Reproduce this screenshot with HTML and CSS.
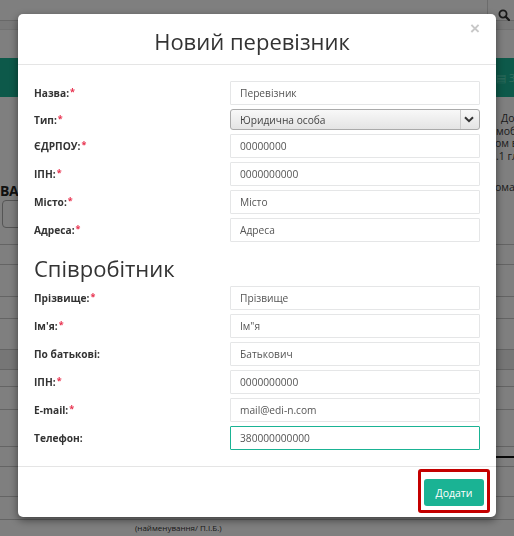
FILE: index.html
```html
<!DOCTYPE html>
<html lang="uk">
<head>
<meta charset="utf-8">
<title>Новий перевізник</title>
<link rel="stylesheet" href="styles.css">
</head>
<body>
<div class="page">
  <div class="topbar">
    <div class="search">
      <svg width="12" height="12" viewBox="0 0 12 12"><circle cx="5" cy="5" r="3.6" fill="none" stroke="#333" stroke-width="1.8"/><line x1="7.6" y1="7.6" x2="11" y2="11" stroke="#333" stroke-width="2.2" stroke-linecap="round"/></svg>
    </div>
  </div>
  <div class="subbar"></div>
  <div class="crumbs"></div>
  <div class="greenbar"><span class="savebtn">&#9636;&nbsp;Зберегти</span></div>
  <div class="content">
    <div class="left-col">
      <div class="ba">ВА</div>
      <div class="ba-box"></div>
    </div>
    <div class="right-text">
      <div class="ind">Довідка</div>
      <div>мобільного</div>
      <div class="cut">ом водія</div>
      <div>.1 глави</div>
      <div class="cut gap">ома</div>
    </div>
  </div>
  <div class="rows">
    <div class="r r1"></div>
    <div class="r r2"></div>
    <div class="r r3"></div>
    <div class="r r4"></div>
    <div class="r r5 dark"></div>
    <div class="r r6"></div>
    <div class="r r7"></div>
    <div class="r r8"></div>
    <div class="r r9"><span class="blackline"></span></div>
    <div class="r r10"></div>
    <div class="r r11"></div>
  </div>
  <div class="caption">(найменування/ П.І.Б.)</div>
</div>

<div class="backdrop"></div>

<div class="modal">
  <div class="modal-header">
    <span class="close">&times;</span>
    <h4 class="modal-title">Новий перевізник</h4>
  </div>
  <div class="modal-body">
    <div class="form-grid">
      <label class="lbl">Назва:<span class="req">*</span></label>
      <input class="fc" type="text" value="Перевізник">
      <label class="lbl">Тип:<span class="req">*</span></label>
      <div class="sel"><span class="sel-text">Юридична особа</span><span class="sel-arrow"><svg width="10" height="7" viewBox="0 0 10 7"><polyline points="1,1.2 5,5.2 9,1.2" fill="none" stroke="#333" stroke-width="2"/></svg></span></div>
      <label class="lbl">ЄДРПОУ:<span class="req">*</span></label>
      <input class="fc" type="text" value="00000000">
      <label class="lbl">ІПН:<span class="req">*</span></label>
      <input class="fc" type="text" value="0000000000">
      <label class="lbl">Місто:<span class="req">*</span></label>
      <input class="fc" type="text" value="Місто">
      <label class="lbl">Адреса:<span class="req">*</span></label>
      <input class="fc" type="text" value="Адреса">
    </div>
    <h3 class="section">Співробітник</h3>
    <div class="form-grid">
      <label class="lbl">Прізвище:<span class="req">*</span></label>
      <input class="fc" type="text" value="Прізвище">
      <label class="lbl">Ім'я:<span class="req">*</span></label>
      <input class="fc" type="text" value='Ім"я'>
      <label class="lbl">По батькові:</label>
      <input class="fc" type="text" value="Батькович">
      <label class="lbl">ІПН:<span class="req">*</span></label>
      <input class="fc" type="text" value="0000000000">
      <label class="lbl">E-mail:<span class="req">*</span></label>
      <input class="fc" type="text" value="mail@edi-n.com">
      <label class="lbl">Телефон:</label>
      <input class="fc focus" type="text" value="380000000000">
    </div>
  </div>
  <div class="modal-footer">
    <span class="highlight"><button class="btn-add" type="button">Додати</button></span>
  </div>
</div>
</body>
</html>
```

FILE: styles.css
```css
* { box-sizing: border-box; }
html, body { margin: 0; padding: 0; }
body {
  font-family: "Open Sans", "Noto Sans", sans-serif;
  background: #fff;
  width: 514px;
  height: 536px;
  overflow: hidden;
  color: #333;
}

/* background page */
.page { width: 514px; height: 536px; overflow: hidden; }
.topbar {
  height: 21px;
  border-bottom: 1px solid #d0d0d0;
  display: flex;
  justify-content: flex-end;
  background: #fff;
}
.search {
  width: 27px;
  border-left: 1px solid #d8d8d8;
  padding: 4px 0 0 10px;
}
.subbar { height: 9px; background: #f2f2f2; border-bottom: 1px solid #e4e4e4; }
.crumbs { height: 28px; background: #fff; }
.greenbar {
  height: 39px;
  background: #1ab394;
  display: flex;
  justify-content: flex-end;
  align-items: center;
  overflow: hidden;
}
.savebtn {
  font-size: 11px;
  color: #5fd6b9;
  white-space: nowrap;
  width: 20px;
  overflow: hidden;
  margin-right: -2px;
}
.content {
  height: 148px;
  display: flex;
  justify-content: space-between;
  border-bottom: 1px solid #c8c8c8;
}
.left-col { padding-top: 87px; width: 30px; }
.ba { font-size: 14px; font-weight: 700; line-height: 14px; color: #222; letter-spacing: -0.5px; }
.ba-box {
  margin: 2px 0 0 2px;
  width: 40px;
  height: 28px;
  border: 1px solid #aaa;
  border-radius: 4px;
  background: #fff;
}
.right-text {
  width: 18px;
  overflow: hidden;
  white-space: nowrap;
  font-size: 10.5px;
  line-height: 12.6px;
  color: #3a3a3a;
  padding-top: 15px;
}
.right-text .ind { padding-left: 5px; }
.right-text .cut { margin-left: -1px; }
.right-text .gap { margin-top: 19px; }

.rows { display: flex; flex-direction: column; }
.r { border-bottom: 1px solid #c8c8c8; }
.r1 { height: 20px; }
.r2 { height: 32px; }
.r3 { height: 22px; }
.r4 { height: 31px; }
.r5 { height: 20px; }
.r5.dark { background: #ececec; }
.r6 { height: 17px; }
.r7 { height: 23px; }
.r8 { height: 37px; }
.r9 { height: 20px; display: flex; justify-content: flex-end; align-items: flex-start; }
.r10 { height: 30px; }
.r11 { height: 23px; }
.blackline { display: block; width: 18px; height: 2px; background: #111; margin-top: 9px; }
.caption {
  font-size: 8px;
  color: #333;
  padding: 2px 0 0 135px;
  line-height: 12px;
}

.backdrop {
  position: fixed;
  inset: 0;
  background: rgba(0, 0, 0, 0.5);
}

/* modal */
.modal {
  position: fixed;
  top: 14px;
  left: 18px;
  width: 478px;
  background: #fff;
  border-radius: 5px;
  box-shadow: 0 3px 9px rgba(0, 0, 0, 0.5);
}
.modal-header {
  position: relative;
  padding: 16px 0 12px;
  border-bottom: 1px solid #e5e5e5;
}
.modal-title {
  margin: 0;
  font-size: 22px;
  line-height: 22px;
  font-weight: 400;
  color: #333;
  text-align: center;
  padding-right: 10px;
}
.close {
  position: absolute;
  top: 7px;
  right: 16px;
  font-family: "Liberation Sans", sans-serif;
  font-size: 17px;
  font-weight: 700;
  line-height: 16px;
  color: #c8c8c8;
}
.modal-body { padding: 16px 16px 16px; }
.form-grid {
  display: grid;
  grid-template-columns: 196px 250px;
  row-gap: 4px;
  align-items: center;
}
.lbl {
  font-size: 10.2px;
  font-weight: 700;
  color: #333;
  line-height: 18px;
}
.req {
  color: #e8324f;
  font-size: 9px;
  vertical-align: 2px;
  line-height: 1;
  margin-left: 1px;
}
.fc {
  display: block;
  width: 250px;
  height: 24px;
  margin: 0;
  padding: 0 9px;
  border: 1px solid #e5e6e7;
  border-radius: 1px;
  font-family: "Open Sans", sans-serif;
  font-size: 10.2px;
  color: #555;
  background: #fff;
  outline: none;
}
.fc.focus { border-color: #1ab394; }
.sel {
  display: flex;
  height: 21px;
  border: 1px solid #aaa;
  border-radius: 3px;
  background: linear-gradient(#f8f8f8, #e4e4e4);
  font-size: 10.2px;
  color: #444;
  align-items: center;
}
.sel-text { flex: 1; padding-left: 9px; }
.sel-arrow {
  width: 19px;
  height: 100%;
  border-left: 1px solid #ccc;
  display: flex;
  align-items: center;
  justify-content: center;
  padding-right: 3px;
}
.section {
  margin: 14px 0 6px;
  font-size: 22px;
  line-height: 24px;
  font-weight: 400;
  color: #333;
}
.modal-footer {
  display: flex;
  justify-content: flex-end;
  padding: 2px 6px 4px;
  border-top: 1px solid #e5e5e5;
}
.highlight {
  display: inline-block;
  border: 3px solid #c40000;
  border-radius: 3px;
  padding: 7px 3px 4px;
}
.btn-add {
  display: block;
  width: 60px;
  height: 27px;
  border: none;
  border-radius: 3px;
  background: #1ab394;
  color: #fff;
  font-family: "Open Sans", sans-serif;
  font-size: 10.5px;
  padding: 0;
}
```
